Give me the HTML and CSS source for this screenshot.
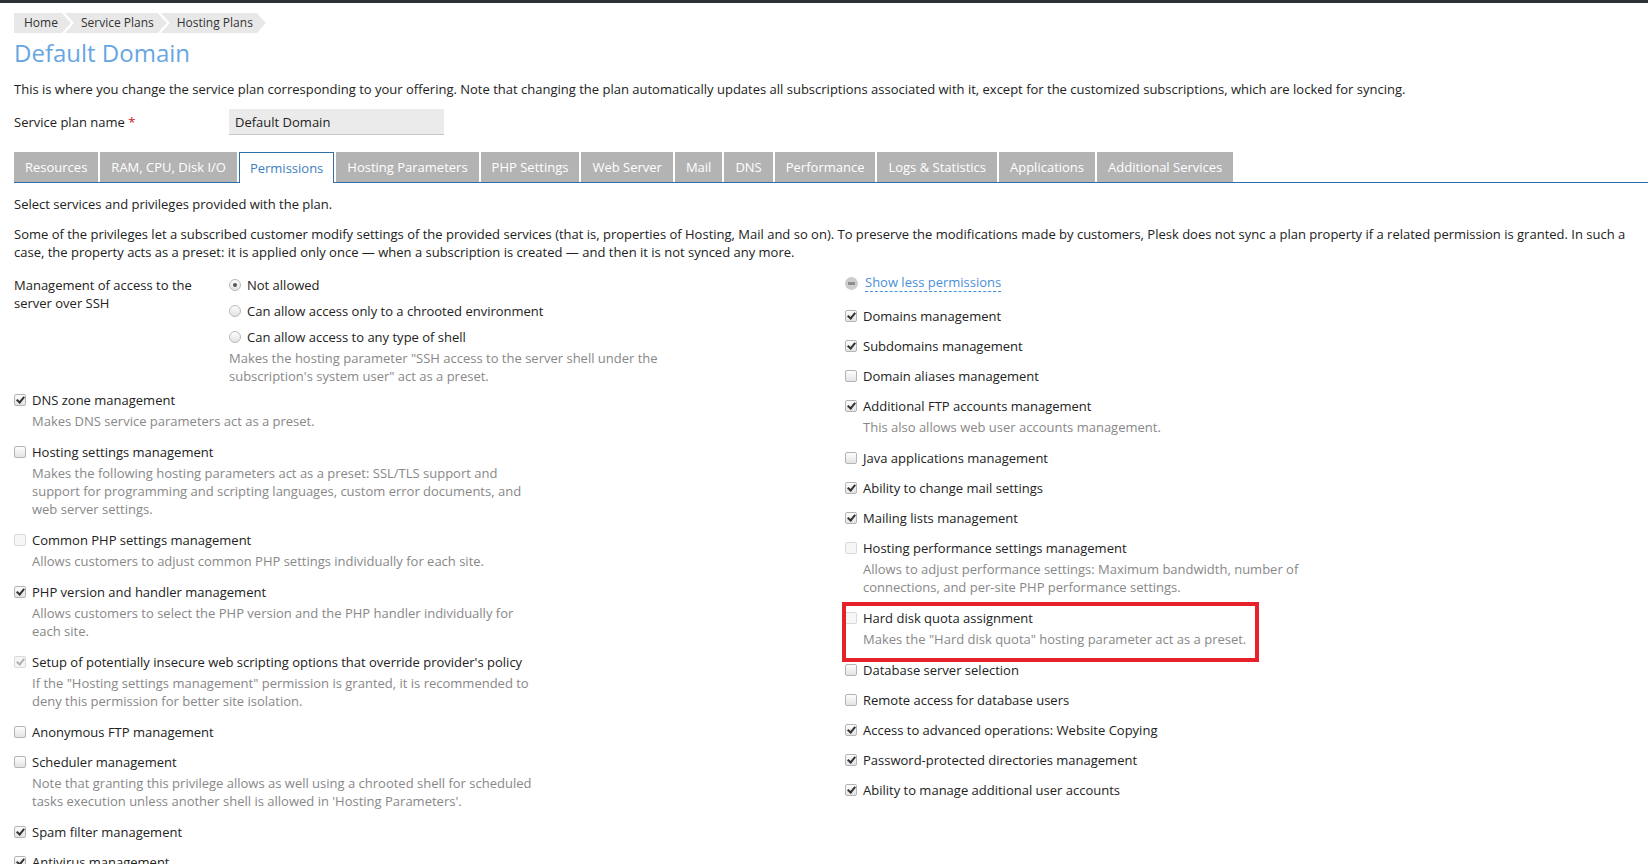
FILE: index.html
```html
<!DOCTYPE html>
<html lang="en">
<head>
    <meta charset="UTF-8">
    <title>Default Domain - Service Plans</title>
    <link rel="stylesheet" href="styles.css">
</head>
<body>
<div class="topbar"></div>
<div class="page">
    <ul class="breadcrumbs">
        <li>Home</li>
        <li>Service Plans</li>
        <li>Hosting Plans</li>
    </ul>
    <h1 class="page-title">Default Domain</h1>
    <p class="intro">This is where you change the service plan corresponding to your offering. Note that changing the plan automatically updates all subscriptions associated with it, except for the customized subscriptions, which are locked for syncing.</p>

    <div class="plan-row">
        <label class="form-label" for="planName">Service plan name <span class="required">*</span></label>
        <input class="text-input" type="text" id="planName" value="Default Domain">
    </div>

    <ul class="tabs">
        <li class="tab">Resources</li>
        <li class="tab">RAM, CPU, Disk I/O</li>
        <li class="tab active">Permissions</li>
        <li class="tab">Hosting Parameters</li>
        <li class="tab">PHP Settings</li>
        <li class="tab">Web Server</li>
        <li class="tab">Mail</li>
        <li class="tab">DNS</li>
        <li class="tab">Performance</li>
        <li class="tab">Logs &amp; Statistics</li>
        <li class="tab">Applications</li>
        <li class="tab">Additional Services</li>
    </ul>

    <p class="tab-intro">Select services and privileges provided with the plan.</p>
    <p class="tab-note">Some of the privileges let a subscribed customer modify settings of the provided services (that is, properties of Hosting, Mail and so on). To preserve the modifications made by customers, Plesk does not sync a plan property if a related permission is granted. In such a case, the property acts as a preset: it is applied only once — when a subscription is created — and then it is not synced any more.</p>

    <div class="columns">
        <div class="column">
            <div class="ssh-row">
                <div class="form-label">Management of access to the server over SSH</div>
                <div class="field">
                    <div class="radio-list">
                        <label class="radio-item"><span class="radio checked"></span>Not allowed</label>
                        <label class="radio-item"><span class="radio"></span>Can allow access only to a chrooted environment</label>
                        <label class="radio-item"><span class="radio"></span>Can allow access to any type of shell</label>
                    </div>
                    <div class="hint">Makes the hosting parameter "SSH access to the server shell under the subscription's system user" act as a preset.</div>
                </div>
            </div>

            <div class="option">
                <label class="option-label"><span class="checkbox checked"></span>DNS zone management</label>
                <div class="hint">Makes DNS service parameters act as a preset.</div>
            </div>
            <div class="option">
                <label class="option-label"><span class="checkbox"></span>Hosting settings management</label>
                <div class="hint">Makes the following hosting parameters act as a preset: SSL/TLS support and support for programming and scripting languages, custom error documents, and web server settings.</div>
            </div>
            <div class="option">
                <label class="option-label"><span class="checkbox disabled"></span>Common PHP settings management</label>
                <div class="hint">Allows customers to adjust common PHP settings individually for each site.</div>
            </div>
            <div class="option">
                <label class="option-label"><span class="checkbox checked"></span>PHP version and handler management</label>
                <div class="hint">Allows customers to select the PHP version and the PHP handler individually for each site.</div>
            </div>
            <div class="option">
                <label class="option-label"><span class="checkbox checked disabled"></span>Setup of potentially insecure web scripting options that override provider's policy</label>
                <div class="hint">If the "Hosting settings management" permission is granted, it is recommended to deny this permission for better site isolation.</div>
            </div>
            <div class="option">
                <label class="option-label"><span class="checkbox"></span>Anonymous FTP management</label>
            </div>
            <div class="option">
                <label class="option-label"><span class="checkbox"></span>Scheduler management</label>
                <div class="hint">Note that granting this privilege allows as well using a chrooted shell for scheduled tasks execution unless another shell is allowed in 'Hosting Parameters'.</div>
            </div>
            <div class="option">
                <label class="option-label"><span class="checkbox checked"></span>Spam filter management</label>
            </div>
            <div class="option">
                <label class="option-label"><span class="checkbox checked"></span>Antivirus management</label>
            </div>
        </div>

        <div class="column">
            <div class="show-less">
                <span class="toggle-icon"></span>
                <a class="toggle-link" href="#">Show less permissions</a>
            </div>

            <div class="option">
                <label class="option-label"><span class="checkbox checked"></span>Domains management</label>
            </div>
            <div class="option">
                <label class="option-label"><span class="checkbox checked"></span>Subdomains management</label>
            </div>
            <div class="option">
                <label class="option-label"><span class="checkbox"></span>Domain aliases management</label>
            </div>
            <div class="option">
                <label class="option-label"><span class="checkbox checked"></span>Additional FTP accounts management</label>
                <div class="hint">This also allows web user accounts management.</div>
            </div>
            <div class="option">
                <label class="option-label"><span class="checkbox"></span>Java applications management</label>
            </div>
            <div class="option">
                <label class="option-label"><span class="checkbox checked"></span>Ability to change mail settings</label>
            </div>
            <div class="option">
                <label class="option-label"><span class="checkbox checked"></span>Mailing lists management</label>
            </div>
            <div class="option">
                <label class="option-label"><span class="checkbox disabled"></span>Hosting performance settings management</label>
                <div class="hint">Allows to adjust performance settings: Maximum bandwidth, number of connections, and per-site PHP performance settings.</div>
            </div>
            <div class="option highlighted">
                <label class="option-label"><span class="checkbox disabled"></span>Hard disk quota assignment</label>
                <div class="hint">Makes the "Hard disk quota" hosting parameter act as a preset.</div>
            </div>
            <div class="option">
                <label class="option-label"><span class="checkbox"></span>Database server selection</label>
            </div>
            <div class="option">
                <label class="option-label"><span class="checkbox"></span>Remote access for database users</label>
            </div>
            <div class="option">
                <label class="option-label"><span class="checkbox checked"></span>Access to advanced operations: Website Copying</label>
            </div>
            <div class="option">
                <label class="option-label"><span class="checkbox checked"></span>Password-protected directories management</label>
            </div>
            <div class="option">
                <label class="option-label"><span class="checkbox checked"></span>Ability to manage additional user accounts</label>
            </div>
        </div>
    </div>
</div>
</body>
</html>
```

FILE: styles.css
```css
body {
    margin: 0;
    font-family: "Open Sans", Arial, sans-serif;
    font-size: 13px;
    color: #222;
    background: #fff;
}
.topbar {
    height: 3px;
    background: #2c3136;
}
.page {
    padding: 10px 0 0 14px;
}

/* breadcrumbs */
.breadcrumbs {
    list-style: none;
    margin: 0;
    padding: 0;
    display: flex;
    height: 20px;
}
.breadcrumbs li {
    background: #e8e8e8;
    color: #333;
    font-size: 12px;
    line-height: 20px;
    padding: 0 13px 0 10px;
    clip-path: polygon(0 0, calc(100% - 9px) 0, 100% 50%, calc(100% - 9px) 100%, 0 100%);
}
.breadcrumbs li + li {
    margin-left: -6px;
    padding-left: 16px;
    clip-path: polygon(0 0, calc(100% - 9px) 0, 100% 50%, calc(100% - 9px) 100%, 0 100%, 9px 50%);
}

.page-title {
    margin: 5px 0 0;
    font-size: 24px;
    line-height: 30px;
    font-weight: 400;
    color: #67a6e2;
}
.intro {
    margin: 12px 0 0;
    line-height: 18px;
}

/* plan name */
.plan-row {
    display: flex;
    align-items: center;
    margin-top: 11px;
}
.form-label {
    width: 215px;
    flex-shrink: 0;
    line-height: 18px;
}
.required {
    color: #c4161c;
}
.text-input {
    width: 215px;
    height: 26px;
    box-sizing: border-box;
    border: 0;
    border-bottom: 1px solid #c6c6c6;
    background: #ebebeb;
    padding: 0 6px;
    font-family: "Open Sans", Arial, sans-serif;
    font-size: 13px;
    color: #222;
    outline: none;
}

/* tabs */
.tabs {
    list-style: none;
    margin: 17px 0 0;
    padding: 0;
    display: flex;
    gap: 2px;
    height: 30px;
    border-bottom: 1px solid #2f6ea7;
}
.tab {
    background: #b3b3b3;
    color: #fff;
    padding: 0 11px;
    line-height: 31px;
}
.tab.active {
    background: #fff;
    color: #3d7fc0;
    border: 1px solid #2f6ea7;
    border-bottom: 0;
    height: 31px;
    box-sizing: border-box;
    line-height: 30px;
    padding: 0 10px;
    margin-bottom: -1px;
}

.tab-intro {
    margin: 12px 0 0;
    line-height: 18px;
}
.tab-note {
    margin: 12px 0 0;
    line-height: 18px;
}

/* permission columns */
.columns {
    display: grid;
    grid-template-columns: 831px 1fr;
    margin-top: 9px;
}
.ssh-row {
    display: flex;
    padding-top: 6px;
}
.radio-list {
    display: flex;
    flex-direction: column;
    gap: 8px;
}
.radio-item {
    display: flex;
    align-items: center;
    line-height: 18px;
}
.radio {
    width: 12px;
    height: 12px;
    box-sizing: border-box;
    border: 1px solid #b9b9b9;
    border-radius: 50%;
    background: linear-gradient(#fdfdfd, #e2e2e2);
    margin-right: 6px;
    position: relative;
}
.radio.checked::after {
    content: "";
    position: absolute;
    left: 3px;
    top: 3px;
    width: 4px;
    height: 4px;
    border-radius: 50%;
    background: #555;
}
.hint {
    margin-top: 3px;
    line-height: 18px;
    color: #888;
    max-width: 510px;
}
.option {
    padding: 6px 0;
}
.option .hint {
    padding-left: 18px;
    padding-bottom: 1px;
}
.option-label {
    display: flex;
    align-items: center;
    line-height: 18px;
}
.checkbox {
    width: 12px;
    height: 12px;
    box-sizing: border-box;
    flex-shrink: 0;
    border: 1px solid #b4b4b4;
    border-radius: 2px;
    background: linear-gradient(#fdfdfd, #e3e3e3);
    margin-right: 6px;
    position: relative;
}
.checkbox.checked::after {
    content: "";
    position: absolute;
    left: 3px;
    top: 0;
    width: 3px;
    height: 6px;
    border: solid #333;
    border-width: 0 2px 2px 0;
    transform: rotate(40deg);
}
.checkbox.disabled {
    border-color: #dadada;
    background: #f6f6f6;
}
.checkbox.disabled::after {
    border-color: #b0b0b0;
}

.show-less {
    display: flex;
    align-items: center;
    padding: 4px 0 9px;
    line-height: 17px;
}
.toggle-icon {
    width: 13px;
    height: 13px;
    border-radius: 50%;
    background: #cdcdcd;
    margin-right: 7px;
    position: relative;
}
.toggle-icon::after {
    content: "";
    position: absolute;
    left: 3px;
    top: 5px;
    width: 7px;
    height: 3px;
    background: #8d8d8d;
}
.toggle-link {
    color: #4a8fd8;
    text-decoration: none;
    border-bottom: 1px dashed #4a8fd8;
}

/* annotation frame */
.highlighted {
    position: relative;
}
.highlighted::after {
    content: "";
    position: absolute;
    left: -3px;
    top: -1px;
    bottom: -7px;
    width: 417px;
    box-sizing: border-box;
    border: 4px solid #e5212a;
}
```
